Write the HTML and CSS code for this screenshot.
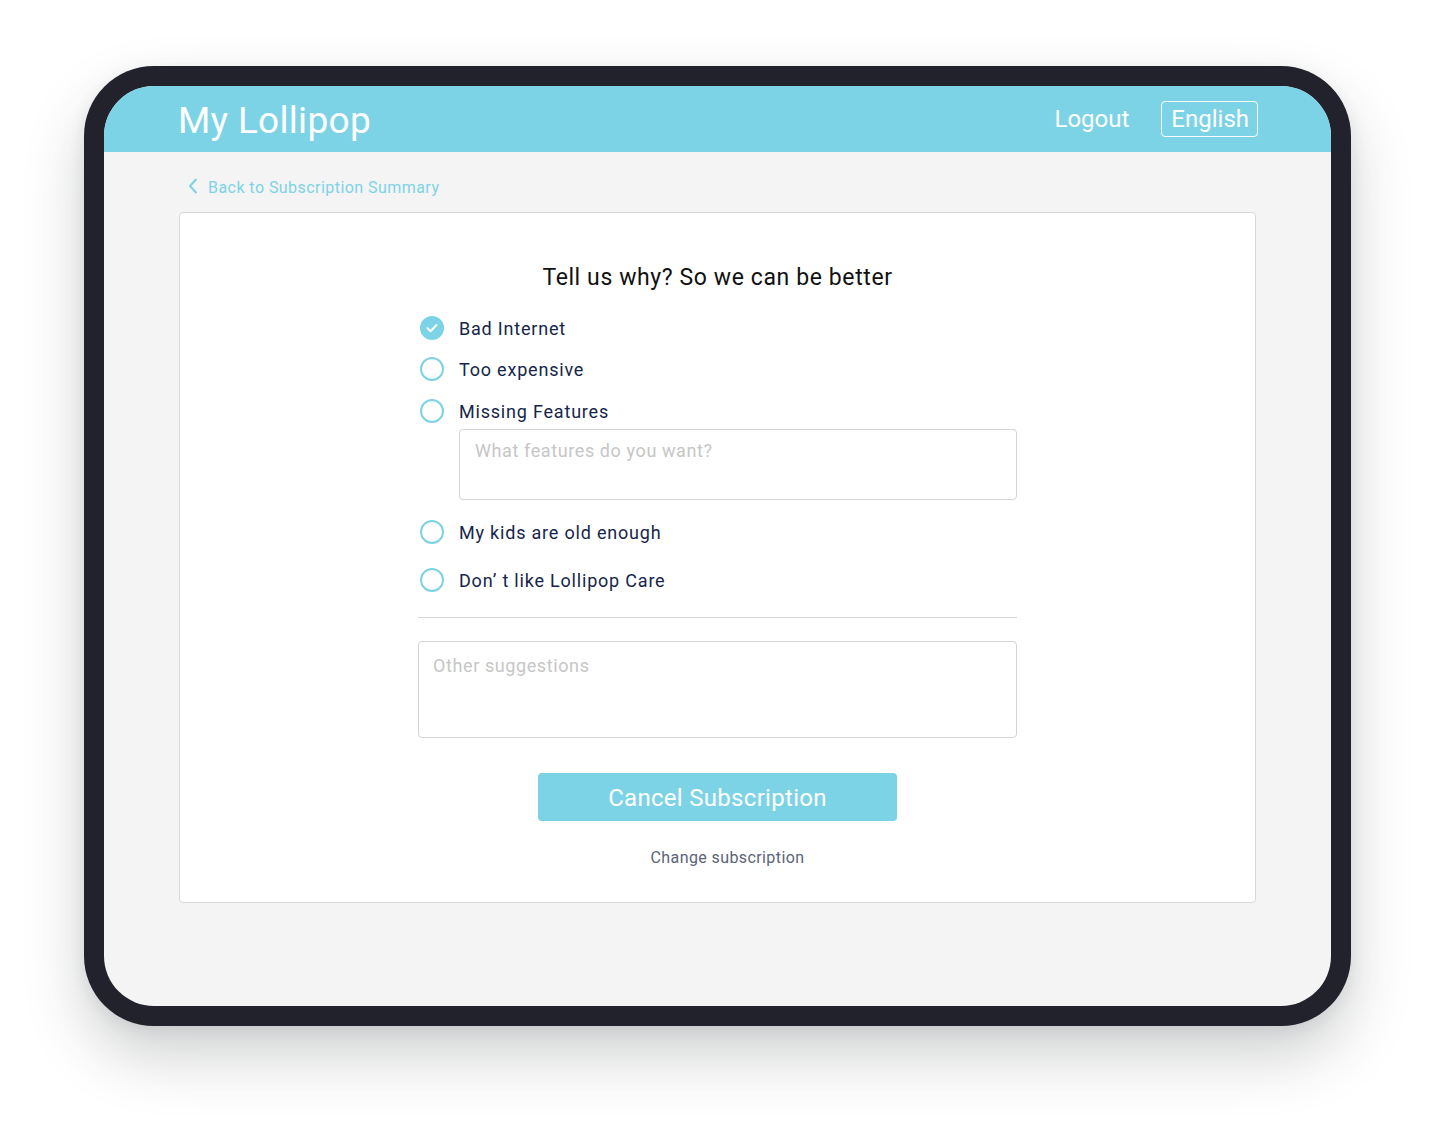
FILE: index.html
```html
<!DOCTYPE html>
<html lang="en">
<head>
<meta charset="utf-8">
<title>My Lollipop</title>
<link rel="stylesheet" href="styles.css">
</head>
<body>
<div class="device">
  <div class="screen">
    <header class="topbar">
      <div class="brand">My Lollipop</div>
      <nav class="nav">
        <a class="logout">Logout</a>
        <a class="lang">English</a>
      </nav>
    </header>
    <main class="content">
      <a class="back">
        <svg class="chev" width="10" height="16" viewBox="0 0 10 16"><path d="M8 1.5 L2 8 L8 14.5" fill="none" stroke="#7dd3e6" stroke-width="2" stroke-linecap="round" stroke-linejoin="round"/></svg>
        <span>Back to Subscription Summary</span>
      </a>
      <section class="card">
        <h1 class="title">Tell us why? So we can be better</h1>
        <div class="form">
          <div class="opt opt1">
            <span class="radio checked"><svg width="24" height="24" viewBox="0 0 24 24"><path d="M7.5 12.3 L10.6 15.2 L16.5 9" fill="none" stroke="#fff" stroke-width="2" stroke-linecap="round" stroke-linejoin="round"/></svg></span>
            <span class="label">Bad Internet</span>
          </div>
          <div class="opt opt2">
            <span class="radio"></span>
            <span class="label">Too expensive</span>
          </div>
          <div class="opt opt3">
            <span class="radio"></span>
            <span class="label">Missing Features</span>
          </div>
          <div class="field small">What features do you want?</div>
          <div class="opt opt4">
            <span class="radio"></span>
            <span class="label">My kids are old enough</span>
          </div>
          <div class="opt opt5">
            <span class="radio"></span>
            <span class="label">Don’ t like Lollipop Care</span>
          </div>
          <hr class="divider">
          <div class="field big">Other suggestions</div>
        </div>
        <button class="cancel">Cancel Subscription</button>
        <a class="change">Change subscription</a>
      </section>
    </main>
  </div>
</div>
</body>
</html>
```

FILE: styles.css
```css
* { box-sizing: border-box; }
html, body { margin: 0; padding: 0; background: #ffffff; }
body {
  font-family: "Roboto", "Noto Sans", sans-serif;
  padding: 66px 0 0 84px;
  height: 1128px;
  overflow: hidden;
}
.device {
  width: 1267px;
  height: 960px;
  background: #22222d;
  border-radius: 70px;
  padding: 20px;
  box-shadow: 0 30px 60px rgba(40, 44, 52, 0.22), 0 4px 16px rgba(40, 44, 52, 0.08);
}
.screen {
  width: 100%;
  height: 100%;
  background: #f4f4f4;
  border-radius: 50px;
  overflow: hidden;
}
.topbar {
  height: 66px;
  background: #7dd3e6;
  display: flex;
  align-items: center;
  justify-content: space-between;
  padding: 0 73px 0 74px;
  color: #fff;
}
.brand {
  font-size: 37px;
  letter-spacing: 0.3px;
  line-height: 1;
  margin-top: 2px;
}
.nav { display: flex; align-items: center; gap: 32px; }
.logout { font-size: 24px; line-height: 1; }
.lang {
  font-size: 24px;
  line-height: 1;
  border: 1px solid #fff;
  border-radius: 4px;
  padding: 5px 8px 5px 9px;
  height: 36px;
  display: flex;
  align-items: center;
}
.content { padding: 24px 75px 0 75px; }
.back {
  display: flex;
  align-items: center;
  gap: 10px;
  color: #7dd3e6;
  font-size: 16px;
  letter-spacing: 0.45px;
  height: 22px;
  padding-left: 9px;
  margin-bottom: 14px;
}
.chev { display: block; margin-top: -3px; }
.card {
  background: #fff;
  border: 1px solid #d8d8d8;
  border-radius: 4px;
  height: 691px;
  padding: 50px 0 0;
  display: flex;
  flex-direction: column;
  align-items: center;
}
.title {
  margin: 0;
  font-size: 23px;
  font-weight: 400;
  line-height: 30px;
  color: #111;
  letter-spacing: 0.6px;
}
.form { width: 599px; margin-top: 23px; }
.opt {
  display: flex;
  align-items: center;
  gap: 15px;
  height: 24px;
  padding-left: 2px;
}
.opt2 { margin-top: 17px; }
.opt3 { margin-top: 18px; }
.opt4 { margin-top: 20px; }
.opt5 { margin-top: 24px; }
.radio {
  width: 24px;
  height: 24px;
  border: 2px solid #7dd3e6;
  border-radius: 50%;
  flex: none;
  display: flex;
  align-items: center;
  justify-content: center;
}
.radio.checked { background: #7dd3e6; border: none; }
.radio svg { display: block; }
.label { font-size: 18px; color: #15264a; letter-spacing: 0.8px; }
.field {
  border: 1px solid #d4d4d4;
  border-radius: 4px;
  color: #c6c6c6;
  font-size: 18px;
  letter-spacing: 0.6px;
  background: #fff;
}
.field.small {
  margin: 6px 0 0 41px;
  height: 71px;
  padding: 10px 15px;
}
.field.big {
  margin-top: 23px;
  height: 97px;
  padding: 13px 14px;
}
.divider {
  border: none;
  border-top: 1px solid #d6d6d6;
  margin: 25px 0 0;
}
.cancel {
  margin-top: 35px;
  width: 359px;
  height: 48px;
  background: #7dd3e6;
  border: none;
  border-radius: 4px;
  color: #fff;
  font-family: inherit;
  font-size: 24px;
  letter-spacing: 0.3px;
  padding-top: 2px;
}
.change {
  margin-top: 25px;
  margin-left: 20px;
  font-size: 16px;
  line-height: 24px;
  color: #5b6379;
  letter-spacing: 0.4px;
}
```
